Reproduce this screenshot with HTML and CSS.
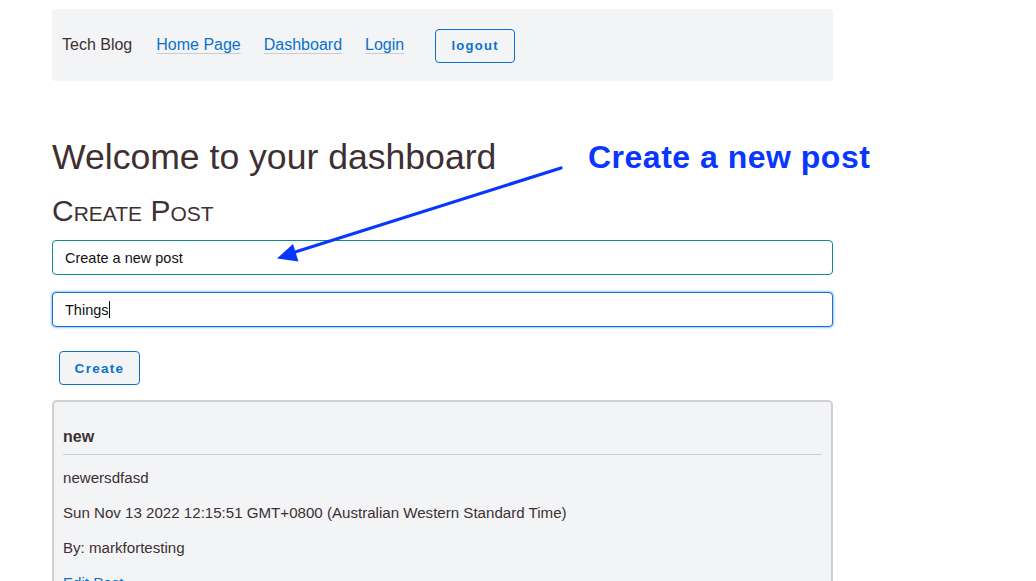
FILE: index.html
```html
<!DOCTYPE html>
<html lang="en">
<head>
<meta charset="utf-8">
<title>Tech Blog - Dashboard</title>
<link rel="stylesheet" href="styles.css">
</head>
<body>
<div class="page">
  <nav class="nav">
    <span class="brand">Tech Blog</span>
    <a class="nav-link" href="#">Home Page</a>
    <a class="nav-link" href="#">Dashboard</a>
    <a class="nav-link" href="#">Login</a>
    <button class="btn btn-logout">logout</button>
  </nav>

  <main class="main">
    <h1 class="title">Welcome to your dashboard</h1>
    <h2 class="subtitle">Create Post</h2>
    <form class="post-form">
      <input class="field field-title" type="text" value="Create a new post">
      <div class="field field-focus"><span>Things</span><span class="caret"></span></div>
      <button class="btn btn-create" type="button">Create</button>
    </form>

    <section class="card">
      <h3 class="card-title">new</h3>
      <hr class="card-rule">
      <p class="card-line">newersdfasd</p>
      <p class="card-line">Sun Nov 13 2022 12:15:51 GMT+0800 (Australian Western Standard Time)</p>
      <p class="card-line">By: markfortesting</p>
      <a class="card-link" href="#">Edit Post</a>
    </section>
  </main>

  <div class="annotation">
    <span class="annotation-text">Create a new post</span>
    <svg class="annotation-arrow" width="1036" height="581" viewBox="0 0 1036 581">
      <line x1="561" y1="168" x2="292" y2="253" stroke="#0a37ff" stroke-width="3.2" stroke-linecap="round"/>
      <polygon points="277,258.5 293,244 298.5,261.5" fill="#0a37ff"/>
    </svg>
  </div>
</div>
</body>
</html>
```
FILE: styles.css
```css
* { box-sizing: border-box; }

html, body {
  margin: 0;
  padding: 0;
  background: #ffffff;
}

body {
  font-family: "Liberation Sans", Arial, Helvetica, sans-serif;
  color: #3e3032;
}

.page {
  position: relative;
  width: 1036px;
  height: 581px;
  overflow: hidden;
  padding: 9px 0 0 52px;
}

.nav {
  display: flex;
  align-items: center;
  width: 781px;
  height: 72px;
  padding: 0 10px;
  background: #f3f4f6;
  border-radius: 4px;
  font-size: 16px;
}

.brand {
  margin-right: 24px;
  color: #3e3032;
}

.nav-link {
  color: #0a72cc;
  text-decoration: underline;
  text-decoration-color: #c9cdd3;
  text-underline-offset: 3px;
  margin-right: 23px;
}

.nav-link:nth-of-type(3) { margin-right: 31px; }

.btn {
  font-family: "Liberation Sans", Arial, Helvetica, sans-serif;
  font-weight: bold;
  font-size: 13px;
  letter-spacing: 1.3px;
  color: #0a72cc;
  background: #f3f4f6;
  border: 1px solid #0a72cc;
  border-radius: 4px;
  height: 34px;
  padding: 0;
}

.btn-logout { width: 80px; margin-top: 1px; }

.main {
  width: 781px;
  display: flex;
  flex-direction: column;
}

.title {
  margin: 55px 0 0;
  font-size: 35.6px;
  font-weight: normal;
  line-height: 43px;
  color: #3e3032;
}

.subtitle {
  margin: 14px 0 0;
  font-size: 30px;
  font-weight: normal;
  font-variant: small-caps;
  line-height: 36px;
  color: #3e3032;
}

.post-form {
  display: flex;
  flex-direction: column;
  align-items: flex-start;
  margin-top: 11px;
}

.field {
  width: 781px;
  height: 35px;
  padding: 0 12px;
  font-family: "Liberation Sans", Arial, Helvetica, sans-serif;
  font-size: 14.5px;
  color: #111111;
  background: #ffffff;
  border-radius: 4px;
  outline: none;
}

.field-title {
  border: 1px solid #0f8b8b;
}

.field-focus {
  display: flex;
  align-items: center;
  margin-top: 17px;
  border: 1px solid #1470d0;
  box-shadow: 0 0 2px 1px rgba(40, 130, 230, 0.45);
}

.caret {
  display: inline-block;
  width: 1px;
  height: 17px;
  background: #111111;
}

.btn-create {
  width: 81px;
  margin: 24px 0 0 7px;
  font-size: 13.5px;
}

.card {
  margin-top: 15px;
  width: 781px;
  height: 200px;
  padding: 25px 9px 0;
  background: #f3f4f6;
  border: 2px solid #d0d0d0;
  border-radius: 5px;
}

.card-title {
  margin: 0;
  font-size: 16px;
  line-height: 20px;
  font-weight: bold;
  color: #3e3032;
}

.card-rule {
  margin: 7px 0 0;
  border: 0;
  border-top: 1px solid #cfcfcf;
  height: 0;
}

.card-line {
  margin: 13px 0 0;
  font-size: 15.1px;
  line-height: 20px;
}

.card-line + .card-line { margin-top: 15px; }

.card-link {
  display: block;
  margin-top: 15px;
  font-size: 15.1px;
  line-height: 20px;
  color: #0a72cc;
  text-decoration: none;
}

.annotation {
  position: absolute;
  left: 0;
  top: 0;
  width: 1036px;
  height: 581px;
  pointer-events: none;
}

.annotation-text {
  position: absolute;
  left: 588px;
  top: 139px;
  font-size: 32px;
  line-height: 37px;
  font-weight: bold;
  letter-spacing: 0.5px;
  color: #0a37ff;
  white-space: nowrap;
}

.annotation-arrow {
  position: absolute;
  left: 0;
  top: 0;
}
```
